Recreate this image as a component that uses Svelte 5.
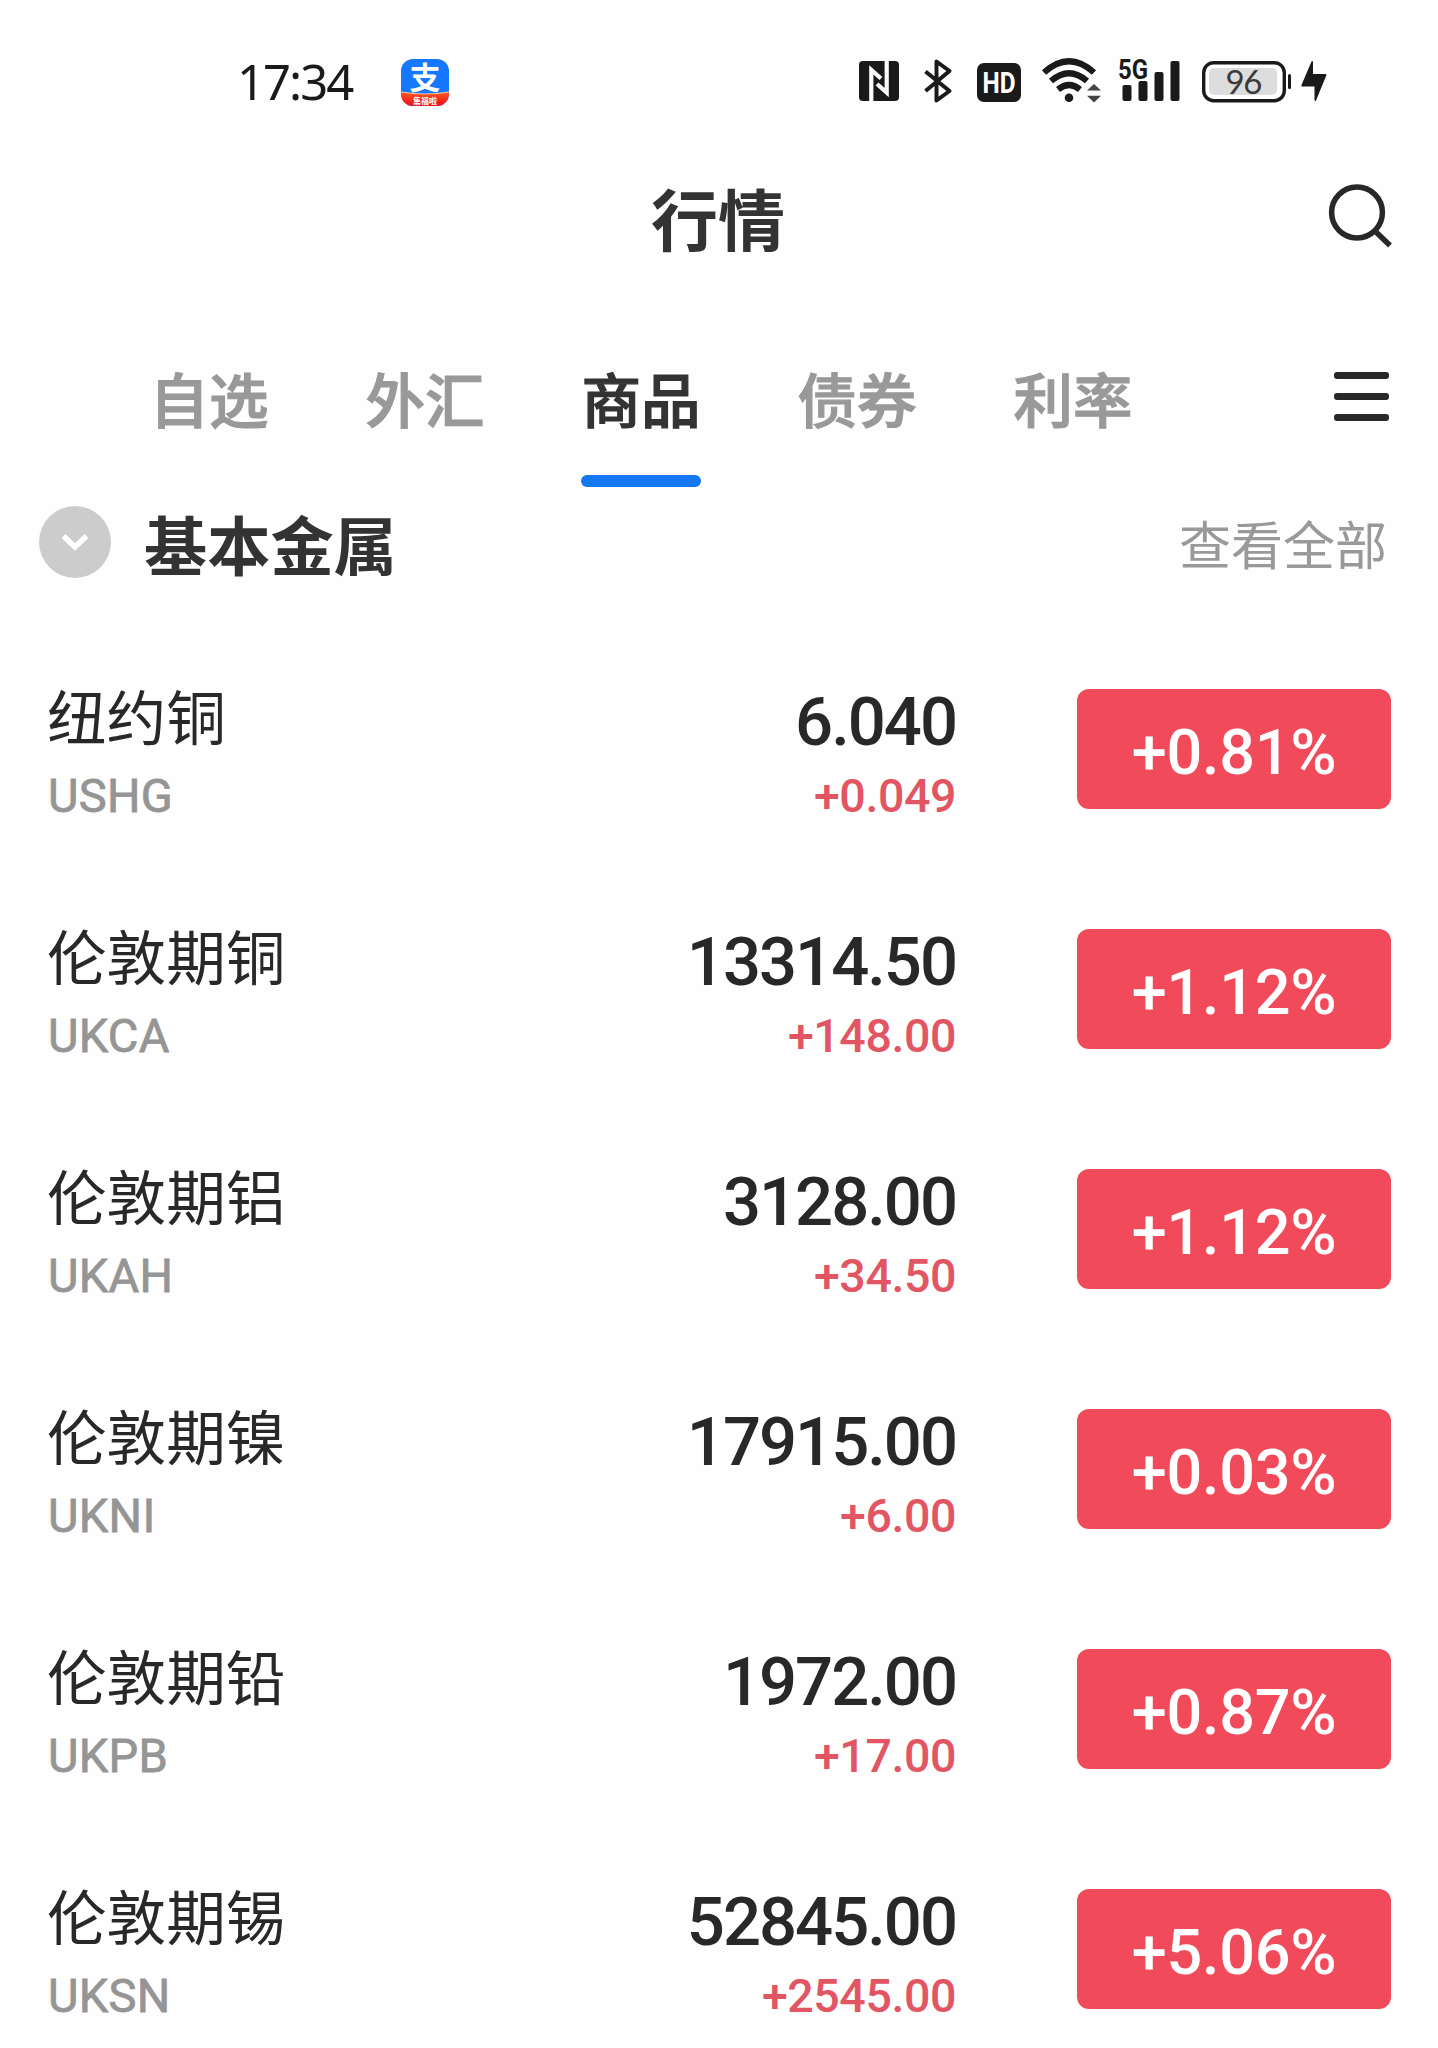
<script>
	let activeTab = '商品';
	let collapsed = false;

	const tabs = ['自选', '外汇', '商品', '债券', '利率'];

	const quotes = [
		{ name: '纽约铜', code: 'USHG', price: '6.040', change: '+0.049', percent: '+0.81%' },
		{ name: '伦敦期铜', code: 'UKCA', price: '13314.50', change: '+148.00', percent: '+1.12%' },
		{ name: '伦敦期铝', code: 'UKAH', price: '3128.00', change: '+34.50', percent: '+1.12%' },
		{ name: '伦敦期镍', code: 'UKNI', price: '17915.00', change: '+6.00', percent: '+0.03%' },
		{ name: '伦敦期铅', code: 'UKPB', price: '1972.00', change: '+17.00', percent: '+0.87%' },
		{ name: '伦敦期锡', code: 'UKSN', price: '52845.00', change: '+2545.00', percent: '+5.06%' }
	];
</script>

<svelte:head>
	<title>行情</title>
</svelte:head>

<div class="page">
	<!-- 状态栏 -->
	<div class="status-bar">
		<span class="time">17:34</span>
		<svg class="app-icon" width="48" height="48" viewBox="0 0 48 48">
			<defs>
				<linearGradient id="banner" x1="0" y1="0" x2="0" y2="1">
					<stop offset="0" stop-color="#fb5a1e" />
					<stop offset="1" stop-color="#ee0a1c" />
				</linearGradient>
			</defs>
			<rect y="1" width="48" height="47" rx="12" fill="#1677ff" />
			<path d="M0 34Q24 38 48 34V36A12 12 0 0 1 36 48H12A12 12 0 0 1 0 36Z" fill="url(#banner)" />
			<path d="M0 34Q24 38 48 34" fill="none" stroke="#ffc9a0" stroke-width="1.2" />
			<text class="app-char" x="24" y="31" text-anchor="middle">支</text>
			<text class="app-tag" x="24" y="45.500" text-anchor="middle">集福啦</text>
		</svg>

		<div class="status-icons">
			<svg class="nfc" width="40" height="48" viewBox="0 0 40 48">
				<rect y="4" width="40" height="40" rx="4" fill="#1a1a1a" />
				<path d="M12.3 44V13L22 21.5M27.7 4V35.500L18 27" fill="none" stroke="#fff" stroke-width="4.200" />
			</svg>
			<svg class="bluetooth" width="28" height="48" viewBox="0 0 28 48">
				<path d="M1.500 14.500L25.500 34L12.500 43.500V4.500L25.500 14L1.500 34" fill="none" stroke="#1a1a1a" stroke-width="4" stroke-linejoin="round" />
			</svg>
			<svg class="hd" width="44" height="48" viewBox="0 0 44 48">
				<rect y="6" width="44" height="39" rx="7" fill="#1a1a1a" />
				<text class="hd-text" x="22" y="35.500" text-anchor="middle" textLength="33" lengthAdjust="spacingAndGlyphs">HD</text>
			</svg>
			<svg class="wifi" width="60" height="48" viewBox="0 0 60 48">
				<g fill="none" stroke="#1a1a1a" stroke-width="6.200">
					<path d="M2 15.500Q27 -7 52 15.500" />
					<path d="M9 24Q27 8.500 45 24" />
					<path d="M16 32.500Q27 23.500 38 32.500" />
				</g>
				<circle cx="27" cy="40.800" r="4.300" fill="#1a1a1a" />
				<path d="M45 33.500L52 27L59 33.500ZM45 38.800L52 45.500L59 38.800Z" fill="#444" />
			</svg>
			<svg class="signal" width="62" height="48" viewBox="0 0 62 48">
				<text class="net-text" x="0" y="21.500" textLength="30" lengthAdjust="spacingAndGlyphs">5G</text>
				<g fill="#1a1a1a">
					<rect x="4.500" y="28" width="9" height="16" rx="2" />
					<rect x="20.500" y="24" width="9" height="20" rx="2" />
					<rect x="36.500" y="15" width="9" height="29" rx="2" />
					<rect x="52.500" y="4" width="9" height="40" rx="2" />
				</g>
			</svg>
			<svg class="battery" width="90" height="48" viewBox="0 0 90 48">
				<rect x="1.700" y="5.700" width="80.600" height="38" rx="10" fill="#fff" stroke="#1a1a1a" stroke-width="3.400" />
				<rect x="7" y="11" width="68" height="27" rx="5" fill="#ddd" />
				<rect x="86" y="17" width="3" height="15" rx="1.500" fill="#1a1a1a" />
				<text class="battery-text" x="42" y="36.500" text-anchor="middle" textLength="37">96</text>
			</svg>
			<svg class="bolt" width="26" height="48" viewBox="0 0 26 48">
				<path d="M10.500 4.500Q12 3 12 5.500V17H24.500Q26 17 25.300 18.500L15 43.500Q14 45 13.500 43V29.500H1Q0 29.500 .5 28Z" fill="#1a1a1a" />
			</svg>
		</div>
	</div>

	<header class="header">
		<h1>行情</h1>
		<button class="icon-btn search" aria-label="搜索">
			<svg width="64" height="64" viewBox="0 0 64 64" fill="none" stroke="#282828" stroke-width="5.500">
				<circle cx="29" cy="27.500" r="25.400" />
				<path d="M47 46L62 60.500" />
			</svg>
		</button>
	</header>

	<nav class="tabs">
		{#each tabs as tab}
			<button class="tab" class:active={tab === activeTab} on:click={() => (activeTab = tab)}>
				{tab}
			</button>
		{/each}
		<button class="icon-btn menu" aria-label="菜单">
			<span></span>
			<span></span>
			<span></span>
		</button>
	</nav>

	<section>
		<div class="section-head">
			<button class="toggle" class:collapsed aria-label="展开" on:click={() => (collapsed = !collapsed)}>
				<svg width="28" height="18" viewBox="0 0 28 18">
					<path d="M2.500 3L14 14L25.500 3" fill="none" stroke="#fff" stroke-width="5.500" />
				</svg>
			</button>
			<h2>基本金属</h2>
			<span class="view-all">查看全部</span>
		</div>

		{#if !collapsed}
			<div class="quote-list">
				{#each quotes as quote}
					<div class="quote">
						<div class="info">
							<div class="name">{quote.name}</div>
							<div class="code">{quote.code}</div>
						</div>
						<div class="values">
							<div class="price">{quote.price}</div>
							<div class="change">{quote.change}</div>
						</div>
						<div class="badge">{quote.percent}</div>
					</div>
				{/each}
			</div>
		{/if}
	</section>
</div>

<style>
	:global(body) {
		background: #fefefe;
	}

	.page {
		width: 1438px;
		height: 2048px;
		overflow: hidden;
		background: #fefefe;
		color: #282828;
		font-family: Roboto, 'Noto Sans CJK SC', sans-serif;
	}

	button {
		padding: 0;
		border: none;
		background: none;
		font-family: inherit;
		cursor: pointer;
	}

	svg {
		display: block;
		overflow: visible;
	}

	.status-bar {
		display: flex;
		align-items: center;
		height: 162px;
		padding: 0 111px 0 237px;
		box-sizing: border-box;
	}

	.time {
		width: 164px;
		font-family: 'Noto Sans', sans-serif;
		font-size: 49px;
		letter-spacing: -2px;
		color: #1a1a1a;
	}

	.app-icon {
		margin-top: 2px;
	}

	.app-char {
		font: 700 31px 'Noto Sans CJK SC', sans-serif;
		fill: #fff;
	}

	.app-tag {
		font: 700 8px 'Noto Sans CJK SC', sans-serif;
		fill: #fff;
	}

	.status-icons {
		display: flex;
		align-items: center;
		margin-left: auto;
	}

	.bluetooth {
		margin-left: 25px;
	}

	.hd {
		margin-left: 25px;
	}

	.wifi {
		margin-left: 21px;
	}

	.signal {
		margin-left: 16px;
	}

	.battery {
		margin-left: 22px;
	}

	.bolt {
		margin-left: 9px;
	}

	.hd-text {
		font: 700 29px Roboto, sans-serif;
		fill: #fff;
	}

	.net-text {
		font: 700 28px Roboto, sans-serif;
		fill: #1a1a1a;
	}

	.battery-text {
		font: 400 33px Lato, sans-serif;
		fill: #3a3a3a;
	}

	.header {
		display: grid;
		grid-template-columns: 64px 1fr 64px;
		align-items: center;
		height: 106px;
		margin-top: 2px;
		padding: 0 46px;
	}

	h1 {
		grid-column: 2;
		margin: 0;
		padding: 12px 2px 0 0;
		text-align: center;
		font-size: 67px;
		line-height: 94px;
		font-weight: 700;
		color: #333;
	}

	.tabs {
		display: flex;
		align-items: flex-start;
		gap: 96px;
		height: 145px;
		margin-top: 72px;
		padding: 0 49px 0 149px;
	}

	.tab {
		display: flex;
		flex-direction: column;
		align-items: center;
		justify-content: space-between;
		width: 120px;
		height: 145px;
		font-size: 59.5px;
		line-height: 122px;
		font-weight: 500;
		-webkit-text-stroke: 1.2px currentColor;
		color: #999;
		white-space: nowrap;
	}

	.tab.active {
		color: #333;
	}

	.tab::after {
		content: '';
		width: 120px;
		height: 12px;
		border-radius: 6px;
	}

	.tab.active::after {
		background: #1677f2;
	}

	.menu {
		display: flex;
		flex-direction: column;
		gap: 14px;
		margin: 30px 0 0 auto;
	}

	.menu span {
		width: 55px;
		height: 7px;
		border-radius: 3px;
		background: #282828;
	}

	.section-head {
		display: flex;
		align-items: center;
		height: 110px;
		padding: 0 51px 0 39px;
	}

	.toggle {
		display: flex;
		align-items: center;
		justify-content: center;
		width: 72px;
		height: 72px;
		border-radius: 50%;
		background: #ccc;
	}

	.toggle.collapsed svg {
		transform: rotate(-90deg);
	}

	h2 {
		margin: 0 auto 0 33px;
		font-size: 63.2px;
		font-weight: 700;
		color: #333;
	}

	.view-all {
		font-size: 52px;
		color: #999;
	}

	.quote-list {
		padding-top: 32px;
	}

	.quote {
		display: grid;
		grid-template-columns: 1fr 500px 314px;
		align-items: center;
		height: 240px;
		padding: 0 47px 0 47px;
	}

	.info {
		padding-top: 11px;
	}

	.name {
		font-size: 59.6px;
		line-height: 78px;
	}

	.code {
		padding: 5px 0 0 1px;
		font-size: 47px;
		line-height: 64px;
		letter-spacing: 0.3px;
		-webkit-text-stroke: 0.8px currentColor;
		color: #959595;
	}

	.values {
		padding: 11px 121px 0 0;
		text-align: right;
	}

	.price {
		font-size: 67px;
		line-height: 80px;
		font-weight: 500;
		letter-spacing: -2px;
	}

	.change {
		padding-top: 3px;
		font-size: 46.5px;
		line-height: 62px;
		font-weight: 500;
		letter-spacing: -0.4px;
		color: #e25562;
	}

	.badge {
		height: 120px;
		padding-top: 5px;
		box-sizing: border-box;
		border-radius: 12px;
		background: #f14a5a;
		color: #fff;
		font-size: 63px;
		line-height: 118px;
		font-weight: 500;
		letter-spacing: -0.3px;
		text-align: center;
	}
</style>
